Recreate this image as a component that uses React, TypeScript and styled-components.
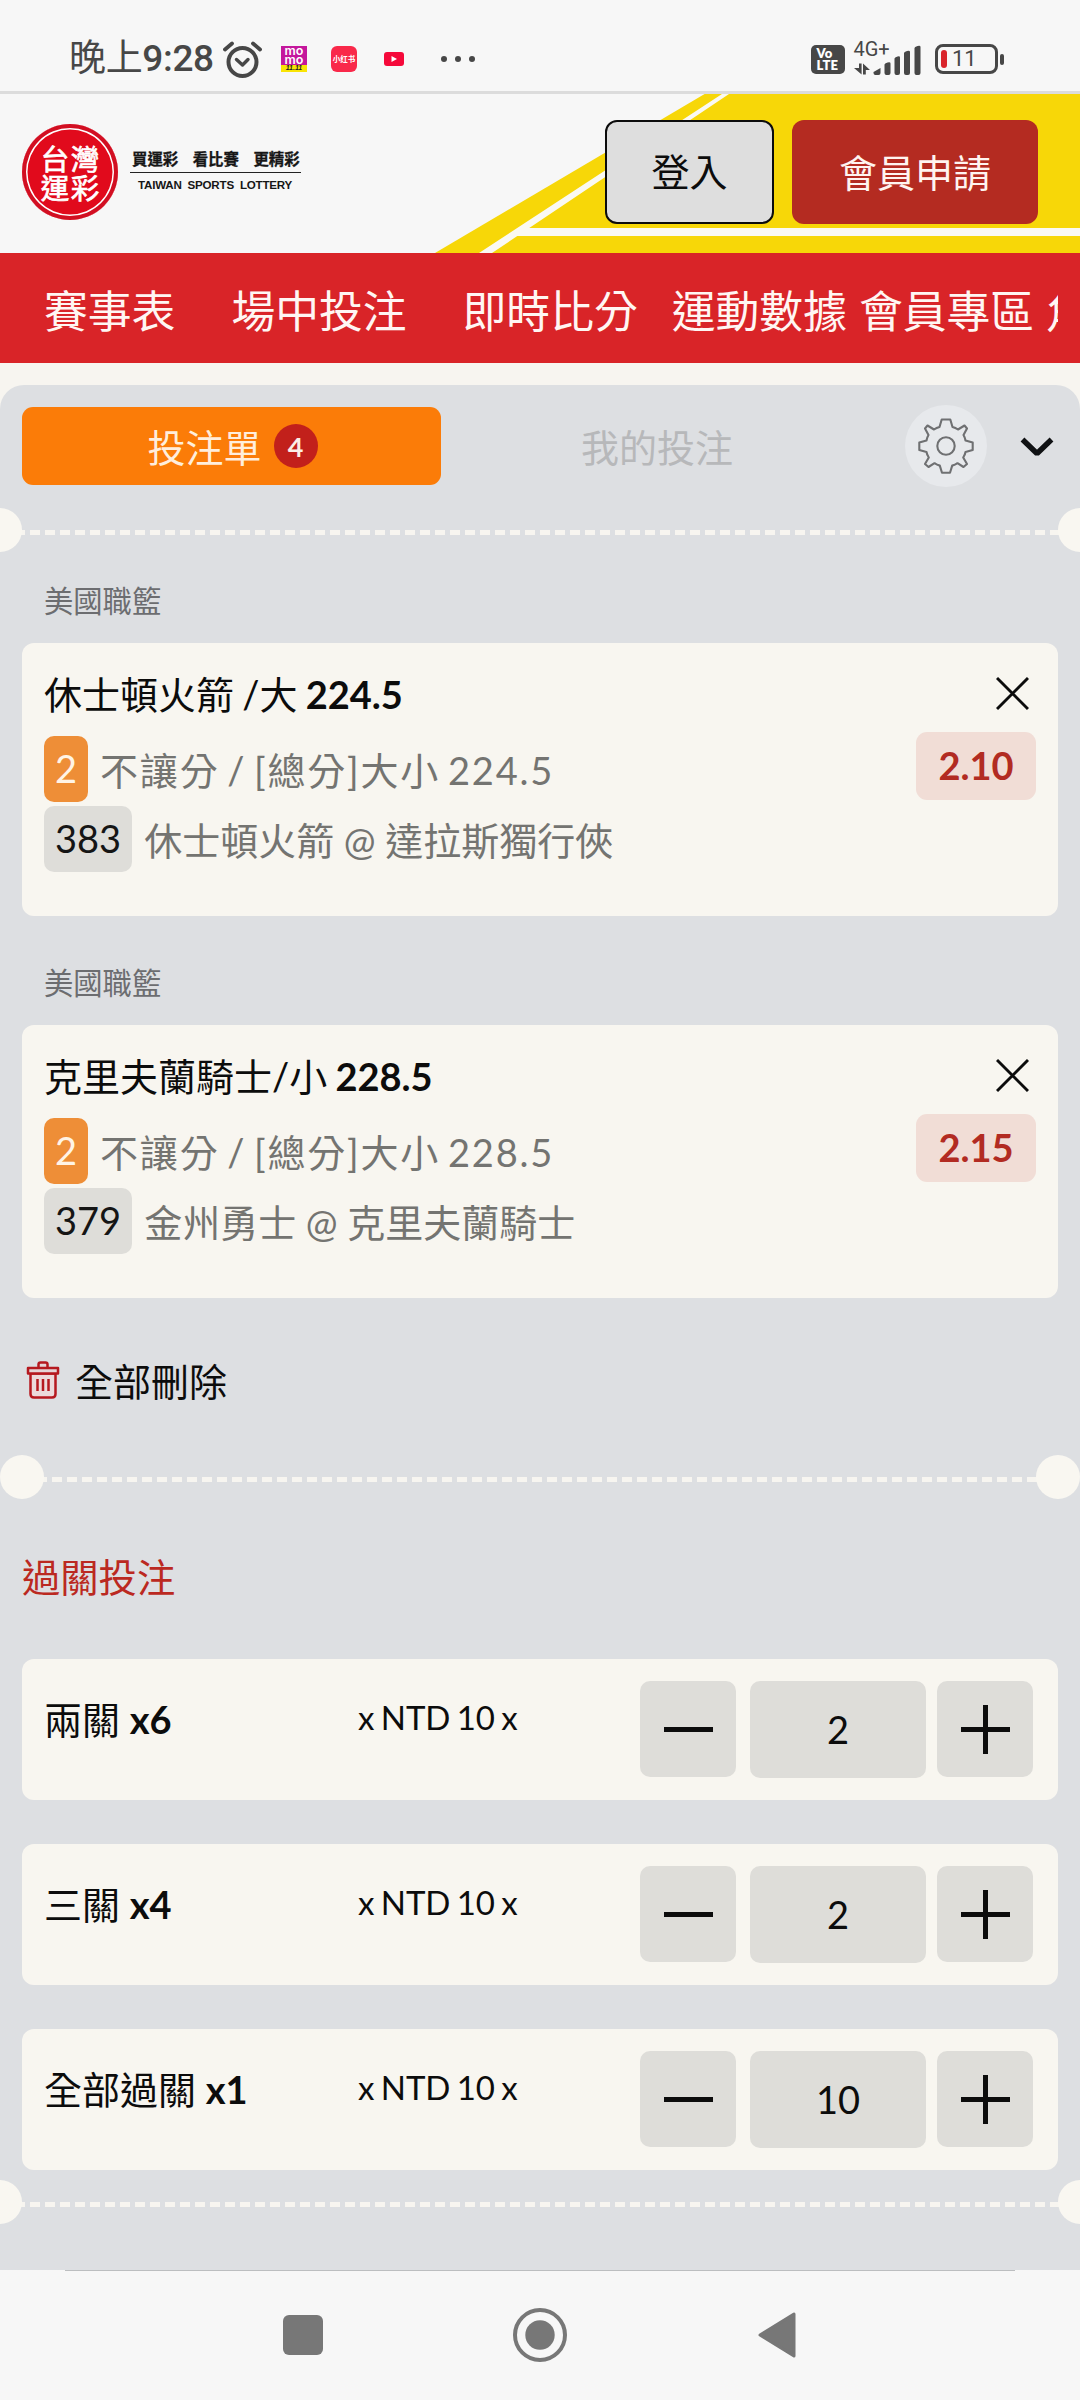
import React from "react";
import styled, { createGlobalStyle } from "styled-components";

const GlobalStyle = createGlobalStyle`
  *, *::before, *::after { box-sizing: border-box; }
  body {
    margin: 0;
    background: #f7f7f7;
    font-family: Lato, "Noto Sans CJK TC", sans-serif;
    font-size: 38px;
    color: #0c0c0c;
  }
  button { font: inherit; color: inherit; border: 0; padding: 0; background: none; }
  svg { display: block; flex: none; }
`;

const Screen = styled.div`
  width: 1080px;
  height: 2400px;
  display: flex;
  flex-direction: column;
  overflow: hidden;
  background: #f7f7f7;
`;

/* ---------- status bar ---------- */

const StatusBar = styled.div`
  height: 94px;
  flex: none;
  display: flex;
  align-items: flex-start;
  justify-content: space-between;
  padding: 38px 76px 0 69px;
  border-bottom: 3px solid #dcdcdc;
  color: #474747;
`;

const StatusGroup = styled.div`
  height: 42px;
  display: flex;
  align-items: center;
`;

const Clock = styled.span`
  font: 400 37px/44px Roboto, "Noto Sans CJK TC", sans-serif;
  letter-spacing: -0.35px;
  white-space: nowrap;
  width: 154px;
`;

const ClockDigits = styled.span`
  font-weight: 500;
`;

const MomoIcon = styled.div`
  margin-left: 19px;
  width: 26px;
  height: 26px;
  background: linear-gradient(#c4179c 0 19px, #f9e405 19px);
  display: flex;
  flex-direction: column;
  align-items: center;
  color: #fff;
  font: 600 12.5px/9px Inter, sans-serif;
`;

const MomoDate = styled.span`
  color: #222;
  font: italic 700 7px/8px "Liberation Sans", sans-serif;
`;

const RedBookIcon = styled.div`
  margin-left: 24px;
  width: 26px;
  height: 26px;
  border-radius: 6px;
  background: #f9294a;
  color: #fff;
  font: 700 7.5px/26px "Noto Sans CJK SC", sans-serif;
  text-align: center;
`;

const VideoIcon = styled.svg`
  margin-left: 27px;
`;

const MoreDots = styled.div`
  margin-left: 37px;
  display: flex;
  gap: 8px;
`;

const Dot = styled.i`
  width: 6px;
  height: 6px;
  border-radius: 50%;
  background: #474747;
`;

const VolteBadge = styled.div`
  width: 34px;
  height: 29px;
  border-radius: 5px;
  background: #474747;
  color: #fff;
  padding: 2px 0 0 5.5px;
  font: 800 13px/12.5px Lato, sans-serif;
  letter-spacing: 0.2px;
`;

const Network = styled.div`
  margin-left: 9px;
`;

const Battery = styled.div`
  margin-left: 14px;
  width: 63px;
  height: 30px;
  border: 3px solid #474747;
  border-radius: 8px;
  padding: 3px;
  display: flex;
  align-items: center;
  font: 400 22px/20px Roboto, sans-serif;
`;

const BatteryLevel = styled.i`
  width: 6px;
  height: 18px;
  border-radius: 3px;
  margin-right: 5px;
  background: #d9242b;
`;

const BatteryTip = styled.i`
  margin-left: 2px;
  width: 4px;
  height: 11px;
  border-radius: 2px;
  background: #474747;
`;

/* ---------- header ---------- */

const Header = styled.header`
  position: relative;
  height: 159px;
  flex: none;
  display: flex;
  align-items: flex-start;
  justify-content: space-between;
  padding: 26px 42px 0 22px;
`;

const HeaderArt = styled.svg`
  position: absolute;
  inset: 0;
`;

const Brand = styled.div`
  position: relative;
  display: flex;
  padding-top: 4px;
`;

const Seal = styled.div`
  width: 96px;
  height: 96px;
  border-radius: 50%;
  background: #e10a1c;
  box-shadow: inset 0 0 0 4px #d20f22, inset 0 0 0 5.5px #fff;
  display: grid;
  grid-template-columns: 30px 30px;
  grid-auto-rows: 29px;
  place-content: center;
  color: #fff;
  font: 400 28.5px/29px "Noto Sans CJK TC", sans-serif;
  -webkit-text-stroke: 0.7px #fff;
  text-align: center;
`;

const Slogan = styled.div`
  margin: 24px 0 0 12px;
  width: 171px;
  color: #161616;
`;

const SloganTop = styled.div`
  height: 25px;
  border-bottom: 1.5px solid #222;
  padding-left: 2px;
  display: flex;
  gap: 14.5px;
  font: 700 15.4px/20px "Noto Sans CJK TC", sans-serif;
  -webkit-text-stroke: 0.3px #161616;
  white-space: nowrap;
`;

const SloganSub = styled.div`
  padding: 5px 0 0 8px;
  font: 700 11.6px/13px "Liberation Sans", sans-serif;
  letter-spacing: -0.22px;
  word-spacing: 3px;
  white-space: nowrap;
`;

const HeaderActions = styled.div`
  position: relative;
  display: flex;
  gap: 18px;
`;

const HeaderButton = styled.button<{ $primary?: boolean }>`
  height: 104px;
  width: ${(p) => (p.$primary ? 246 : 169)}px;
  border-radius: 12px;
  border: ${(p) => (p.$primary ? "0" : "2px solid #0c0c0c")};
  background: ${(p) => (p.$primary ? "#b42b21" : "#dedede")};
  color: ${(p) => (p.$primary ? "#fff4f0" : "#0c0c0c")};
  line-height: ${(p) => (p.$primary ? 104 : 98)}px;
  padding-bottom: 2px;
`;

/* ---------- navigation ---------- */

const Nav = styled.nav`
  height: 110px;
  flex: none;
  padding: 0 22px;
  background: #d92428;
`;

const NavScroller = styled.div`
  height: 110px;
  display: flex;
  align-items: center;
  overflow: hidden;
  padding: 5px 0 0 22px;
  color: #fff6f3;
  font-size: 43.8px;
  line-height: 60px;
  white-space: nowrap;
`;

const NavItem = styled.span<{ $after: number }>`
  flex: none;
  margin-right: ${(p) => p.$after}px;
`;

/* ---------- bet slip ---------- */

const SlipArea = styled.main`
  flex: 1;
  padding-top: 22px;
  background: #f7f5f0;
`;

const Slip = styled.div`
  height: 100%;
  border-radius: 24px 24px 0 0;
  background: #dddfe2;
  padding-top: 20px;
  overflow: hidden;
`;

const Tabs = styled.div`
  height: 82px;
  display: flex;
  align-items: center;
  padding: 0 22px;
`;

const Tab = styled.button<{ $active?: boolean }>`
  width: ${(p) => (p.$active ? 419 : 432)}px;
  height: 78px;
  border-radius: 11px;
  display: flex;
  align-items: center;
  justify-content: center;
  gap: 12px;
  padding-left: ${(p) => (p.$active ? 2 : 0)}px;
  background: ${(p) => (p.$active ? "#fb7c08" : "transparent")};
  color: ${(p) => (p.$active ? "#ffeedc" : "#b7b8ba")};
`;

const TabLabel = styled.span`
  padding-bottom: 2px;
`;

const TabCount = styled.span`
  width: 44px;
  height: 44px;
  border-radius: 50%;
  background: #c2201b;
  color: #fbeee6;
  font-size: 27px;
  font-weight: 700;
  line-height: 45px;
  text-align: center;
`;

const SettingsButton = styled.button`
  margin-left: 32px;
  width: 82px;
  height: 82px;
  border-radius: 50%;
  background: #e7e9ec;
  display: grid;
  place-items: center;
`;

const CollapseButton = styled.button`
  margin: 4px 0 0 33px;
`;

const Perforation = styled.div<{ $inset?: boolean; $top: number }>`
  height: 44px;
  margin: ${(p) => p.$top}px ${(p) => (p.$inset ? 0 : -22)}px 0;
  display: flex;
  justify-content: space-between;
  background: repeating-linear-gradient(90deg, #f7f5f0 0 10px, transparent 10px 15px)
    ${(p) => (p.$inset ? "22px" : "37px")} 22px / 1035px 5px no-repeat;
  ${(p) => (p.$inset ? "" : "background-size: 1065px 5px;")}

  &::before,
  &::after {
    content: "";
    width: 44px;
    height: 44px;
    border-radius: 50%;
    background: #f9f7f1;
  }
`;

const League = styled.div<{ $top: number }>`
  margin-top: ${(p) => p.$top}px;
  padding-left: 44px;
  height: 40px;
  font-size: 29.3px;
  line-height: 40px;
  color: #6c6d70;
`;

const BetCard = styled.section`
  margin: 22px 22px 0;
  height: 273px;
  border-radius: 12px;
  background: #f8f6f0;
  padding: 22px 22px 0;
  display: flex;
  justify-content: space-between;
`;

const BetInfo = styled.div`
  display: flex;
  flex-direction: column;
`;

const BetTitle = styled.div`
  height: 71px;
  line-height: 58px;
  white-space: pre;
  word-spacing: -1.5px;
`;

const BetLine = styled.div<{ $spaced?: boolean }>`
  height: 70px;
  display: flex;
  gap: 12px;
  line-height: 68px;
  color: #747471;
  letter-spacing: ${(p) => (p.$spaced ? 1.8 : 0)}px;
  word-spacing: ${(p) => (p.$spaced ? -3.7 : 0)}px;
  white-space: nowrap;
`;

const Chip = styled.span<{ $orange?: boolean }>`
  height: 66px;
  padding: 0 11px;
  border-radius: 10px;
  background: ${(p) => (p.$orange ? "#ee8e37" : "#deddd9")};
  color: ${(p) => (p.$orange ? "#fff4e6" : "#151515")};
  line-height: 64px;
  letter-spacing: 0;
`;

const BetSide = styled.div`
  display: flex;
  flex-direction: column;
  align-items: flex-end;
  padding-top: 12px;
`;

const RemoveButton = styled.button`
  margin-right: 7px;
`;

const Odds = styled.div`
  margin-top: 22px;
  width: 120px;
  height: 68px;
  border-radius: 11px;
  background: #f1ddd6;
  color: #b22b22;
  font-weight: 700;
  line-height: 67px;
  text-align: center;
`;

const ClearAll = styled.button`
  margin: 54px 0 0 26px;
  height: 56px;
  display: flex;
  align-items: center;
  gap: 15px;
`;

const ClearLabel = styled.span`
  padding-bottom: 2px;
`;

const SectionTitle = styled.h2`
  margin: 49px 0 0 22px;
  font-size: 38.3px;
  font-weight: 400;
  line-height: 58px;
  color: #bb2921;
`;

const ParlayList = styled.div`
  margin: 53px 22px 0;
  display: flex;
  flex-direction: column;
  gap: 44px;
`;

const ParlayRow = styled.section`
  height: 141px;
  border-radius: 12px;
  background: #f8f6f0;
  padding: 22px 25px 0 22px;
  display: flex;
`;

const ParlayName = styled.div`
  width: 314px;
  line-height: 76px;
`;

const ParlayUnit = styled.div`
  width: 282px;
  font-size: 33px;
  line-height: 73px;
  word-spacing: -2.2px;
  white-space: nowrap;
`;

const StepButton = styled.button`
  width: 96px;
  height: 96px;
  border-radius: 10px;
  background: #deddd9;
  display: grid;
  place-items: center;
`;

const Amount = styled.div`
  margin: 0 11px 0 14px;
  width: 176px;
  height: 97px;
  border-radius: 10px;
  background: #deddd9;
  line-height: 96px;
  text-align: center;
`;

/* ---------- system navigation ---------- */

const SystemNav = styled.div`
  height: 130px;
  flex: none;
  display: grid;
  grid-template-columns: repeat(3, 237px);
  justify-content: center;
  align-items: center;
  justify-items: center;
  background: linear-gradient(#bcbec0, #bcbec0) 65px 0 / 950px 1px no-repeat, #f7f7f7;
`;

const AlarmIcon = () => (
  <svg width="39" height="37" viewBox="0 0 39 37" fill="none" stroke="#474747">
    <circle cx="19.5" cy="21" r="14" strokeWidth="4" />
    <path d="M13.5 18.5l6 5.5 5.5-5.5" strokeWidth="3.4" strokeLinecap="round" strokeLinejoin="round" />
    <path d="M2 8.5l7-6M37 8.5l-7-6" strokeWidth="3.8" strokeLinecap="round" />
  </svg>
);

const SignalIcon = () => (
  <svg width="67" height="34" viewBox="0 0 67 34" fill="#474747" overflow="visible">
    <text x="-0.5" y="13.5" fontFamily="Roboto, sans-serif" fontSize="20" textLength="36">4G+</text>
    <path d="M5 21.500h2.600v11L0 26h5zM9 32.500V21.500l7 6.500h-4.200V32.500z" />
    <g transform="translate(0 -1)">
      <path d="M19.500 31l7-4v5q0 2-2 2h-3q-2 0-2-2zM30.500 23.500q0-1 3-2 3-1 3 1V32q0 2-2 2h-2q-2 0-2-2zM40.500 17.500q0-1 3-2 2.500-1 2.500 1V32q0 2-2 2h-1.500q-2 0-2-2zM50 12q0-1 3-2 3-1 3 1V32q0 2-2 2h-2q-2 0-2-2zM60.500 7q0-1 3-2 3-1 3 1V32q0 2-2 2h-2q-2 0-2-2z" />
    </g>
  </svg>
);

const GearIcon = () => (
  <svg width="56" height="56" viewBox="-28 -28 56 56" fill="none" stroke="#6f7072" strokeWidth="2.100" strokeLinejoin="round">
    <circle r="8.7" />
    <path d="M-4.300 -26.500H4.300L6.500 -19Q9.500 -18.200 12 -16.500L18.500 -20.500 21 -17.500 17.500 -11Q19 -8.500 19.500 -5.500L26.700 -3.500V4L19.500 6Q19 9 17.200 11.500L21 18 17.500 21 11.500 17.200Q9 19 6.200 19.600L4 26.700H-4L-6.200 19.600Q-9 19 -11.500 17.200L-17.500 21 -21 18 -17.200 11.500Q-19 9 -19.500 6L-26.700 4V-3.500L-19.500 -5.500Q-19 -8.500 -17.500 -11L-21 -17.500 -18.500 -20.500 -12 -16.500Q-9.500 -18.200 -6.500 -19Z" />
  </svg>
);

const ChevronIcon = () => (
  <svg width="34" height="22" viewBox="0 0 34 22" fill="none" stroke="#101214" strokeWidth="5.500" strokeLinejoin="bevel">
    <path d="M2.500 2.500L17 16.500 31.500 2.500" />
  </svg>
);

const CloseIcon = () => (
  <svg width="33" height="33" viewBox="0 0 33 33" stroke="#0c0c0c" strokeWidth="2.900">
    <path d="M1 1l31 31M32 1L1 32" />
  </svg>
);

const TrashIcon = () => (
  <svg width="34" height="38" viewBox="0 0 34 38" fill="none" stroke="#b5191f" strokeWidth="2.500" strokeLinejoin="round">
    <path d="M4.500 12.500V33q0 3.500 3.500 3.500h18q3.500 0 3.500-3.500V12.500z" fill="#ecdadb" />
    <path d="M2 7h30v5.500H2zM12.500 7V3.500Q12.500 1.500 14.500 1.500h5Q21.500 1.500 21.500 3.500V7" fill="#e5d5d7" />
    <path d="M11.500 18v12M17 18v12M22.500 18v12" />
  </svg>
);

const StepIcon = ({ plus = false }: { plus?: boolean }) => (
  <svg width="50" height="50" viewBox="0 0 50 50" stroke="#0c0c0c" strokeWidth="5">
    <path d={plus ? "M1 25.500H50M25.500 1V50" : "M1 25.500H50"} />
  </svg>
);

const nav = [
  { label: "賽事表", after: 56 },
  { label: "場中投注", after: 56 },
  { label: "即時比分", after: 34 },
  { label: "運動數據", after: 12 },
  { label: "會員專區", after: 12 },
  { label: "角", after: 0 },
];

const bets = [
  { pick: "休士頓火箭 /大 ", line: "224.5", code: "383", match: "休士頓火箭 @ 達拉斯獨行俠", odds: "2.10", top: 29 },
  { pick: "克里夫蘭騎士/小 ", line: "228.5", code: "379", match: "金州勇士 @ 克里夫蘭騎士", odds: "2.15", top: 47 },
];

const parlays = [
  { name: "兩關", count: "x6", amount: 2 },
  { name: "三關", count: "x4", amount: 2 },
  { name: "全部過關", count: "x1", amount: 10 },
];

export default function App() {
  return (
    <Screen>
      <GlobalStyle />
      <StatusBar>
        <StatusGroup>
          <Clock>
            晚上<ClockDigits>9:28</ClockDigits>
          </Clock>
          <AlarmIcon />
          <MomoIcon>
            <span>mo</span>
            <span>mo</span>
            <MomoDate>11.11</MomoDate>
          </MomoIcon>
          <RedBookIcon>小红书</RedBookIcon>
          <VideoIcon width="20" height="14" viewBox="0 0 20 14">
            <rect width="20" height="14" rx="3" fill="#f5093a" />
            <path d="M7.500 4l5.500 3-5.500 3z" fill="#fff" />
          </VideoIcon>
          <MoreDots>
            <Dot />
            <Dot />
            <Dot />
          </MoreDots>
        </StatusGroup>
        <StatusGroup>
          <VolteBadge>
            Vo
            <br />
            LTE
          </VolteBadge>
          <Network>
            <SignalIcon />
          </Network>
          <Battery>
            <BatteryLevel />
            11
          </Battery>
          <BatteryTip />
        </StatusGroup>
      </StatusBar>

      <Header>
        <HeaderArt width="1080" height="159" viewBox="0 0 1080 159">
          <path d="M435 159L704.600 0H1080V159z" fill="#f7d708" />
          <path d="M479 159L722 0H729L492 159zM529 134H1080V142H517z" fill="#faf9f3" />
        </HeaderArt>
        <Brand>
          <Seal>
            <span>台</span>
            <span>灣</span>
            <span>運</span>
            <span>彩</span>
          </Seal>
          <Slogan>
            <SloganTop>
              <span>買運彩</span>
              <span>看比賽</span>
              <span>更精彩</span>
            </SloganTop>
            <SloganSub>TAIWAN SPORTS LOTTERY</SloganSub>
          </Slogan>
        </Brand>
        <HeaderActions>
          <HeaderButton>登入</HeaderButton>
          <HeaderButton $primary>會員申請</HeaderButton>
        </HeaderActions>
      </Header>

      <Nav>
        <NavScroller>
          {nav.map((item) => (
            <NavItem key={item.label} $after={item.after}>
              {item.label}
            </NavItem>
          ))}
        </NavScroller>
      </Nav>

      <SlipArea>
        <Slip>
          <Tabs>
            <Tab $active>
              <TabLabel>投注單</TabLabel>
              <TabCount>4</TabCount>
            </Tab>
            <Tab>
              <TabLabel>我的投注</TabLabel>
            </Tab>
            <SettingsButton>
              <GearIcon />
            </SettingsButton>
            <CollapseButton>
              <ChevronIcon />
            </CollapseButton>
          </Tabs>

          <Perforation $top={21} />

          {bets.map((bet) => (
            <React.Fragment key={bet.code}>
              <League $top={bet.top}>美國職籃</League>
              <BetCard>
                <BetInfo>
                  <BetTitle>
                    {bet.pick}
                    <b>{bet.line}</b>
                  </BetTitle>
                  <BetLine $spaced>
                    <Chip $orange>2</Chip>
                    <span>不讓分 / [總分]大小 {bet.line}</span>
                  </BetLine>
                  <BetLine>
                    <Chip>{bet.code}</Chip>
                    <span>{bet.match}</span>
                  </BetLine>
                </BetInfo>
                <BetSide>
                  <RemoveButton>
                    <CloseIcon />
                  </RemoveButton>
                  <Odds>{bet.odds}</Odds>
                </BetSide>
              </BetCard>
            </React.Fragment>
          ))}

          <ClearAll>
            <TrashIcon />
            <ClearLabel>全部刪除</ClearLabel>
          </ClearAll>

          <Perforation $inset $top={47} />

          <SectionTitle>過關投注</SectionTitle>
          <ParlayList>
            {parlays.map((p) => (
              <ParlayRow key={p.name}>
                <ParlayName>
                  {p.name} <b>{p.count}</b>
                </ParlayName>
                <ParlayUnit>x NTD 10 x</ParlayUnit>
                <StepButton>
                  <StepIcon />
                </StepButton>
                <Amount>{p.amount}</Amount>
                <StepButton>
                  <StepIcon plus />
                </StepButton>
              </ParlayRow>
            ))}
          </ParlayList>

          <Perforation $top={10} />
        </Slip>
      </SlipArea>

      <SystemNav>
        <svg width="40" height="40" viewBox="0 0 40 40">
          <rect width="40" height="40" rx="6" fill="#777" />
        </svg>
        <svg width="54" height="54" viewBox="0 0 54 54">
          <circle cx="27" cy="27" r="25" fill="none" stroke="#777" strokeWidth="4" />
          <circle cx="27" cy="27" r="14.700" fill="#777" />
        </svg>
        <svg width="38" height="46" viewBox="0 0 38 46">
          <path d="M2 23L36 2V44z" fill="#777" stroke="#777" strokeWidth="3" strokeLinejoin="round" />
        </svg>
      </SystemNav>
    </Screen>
  );
}
